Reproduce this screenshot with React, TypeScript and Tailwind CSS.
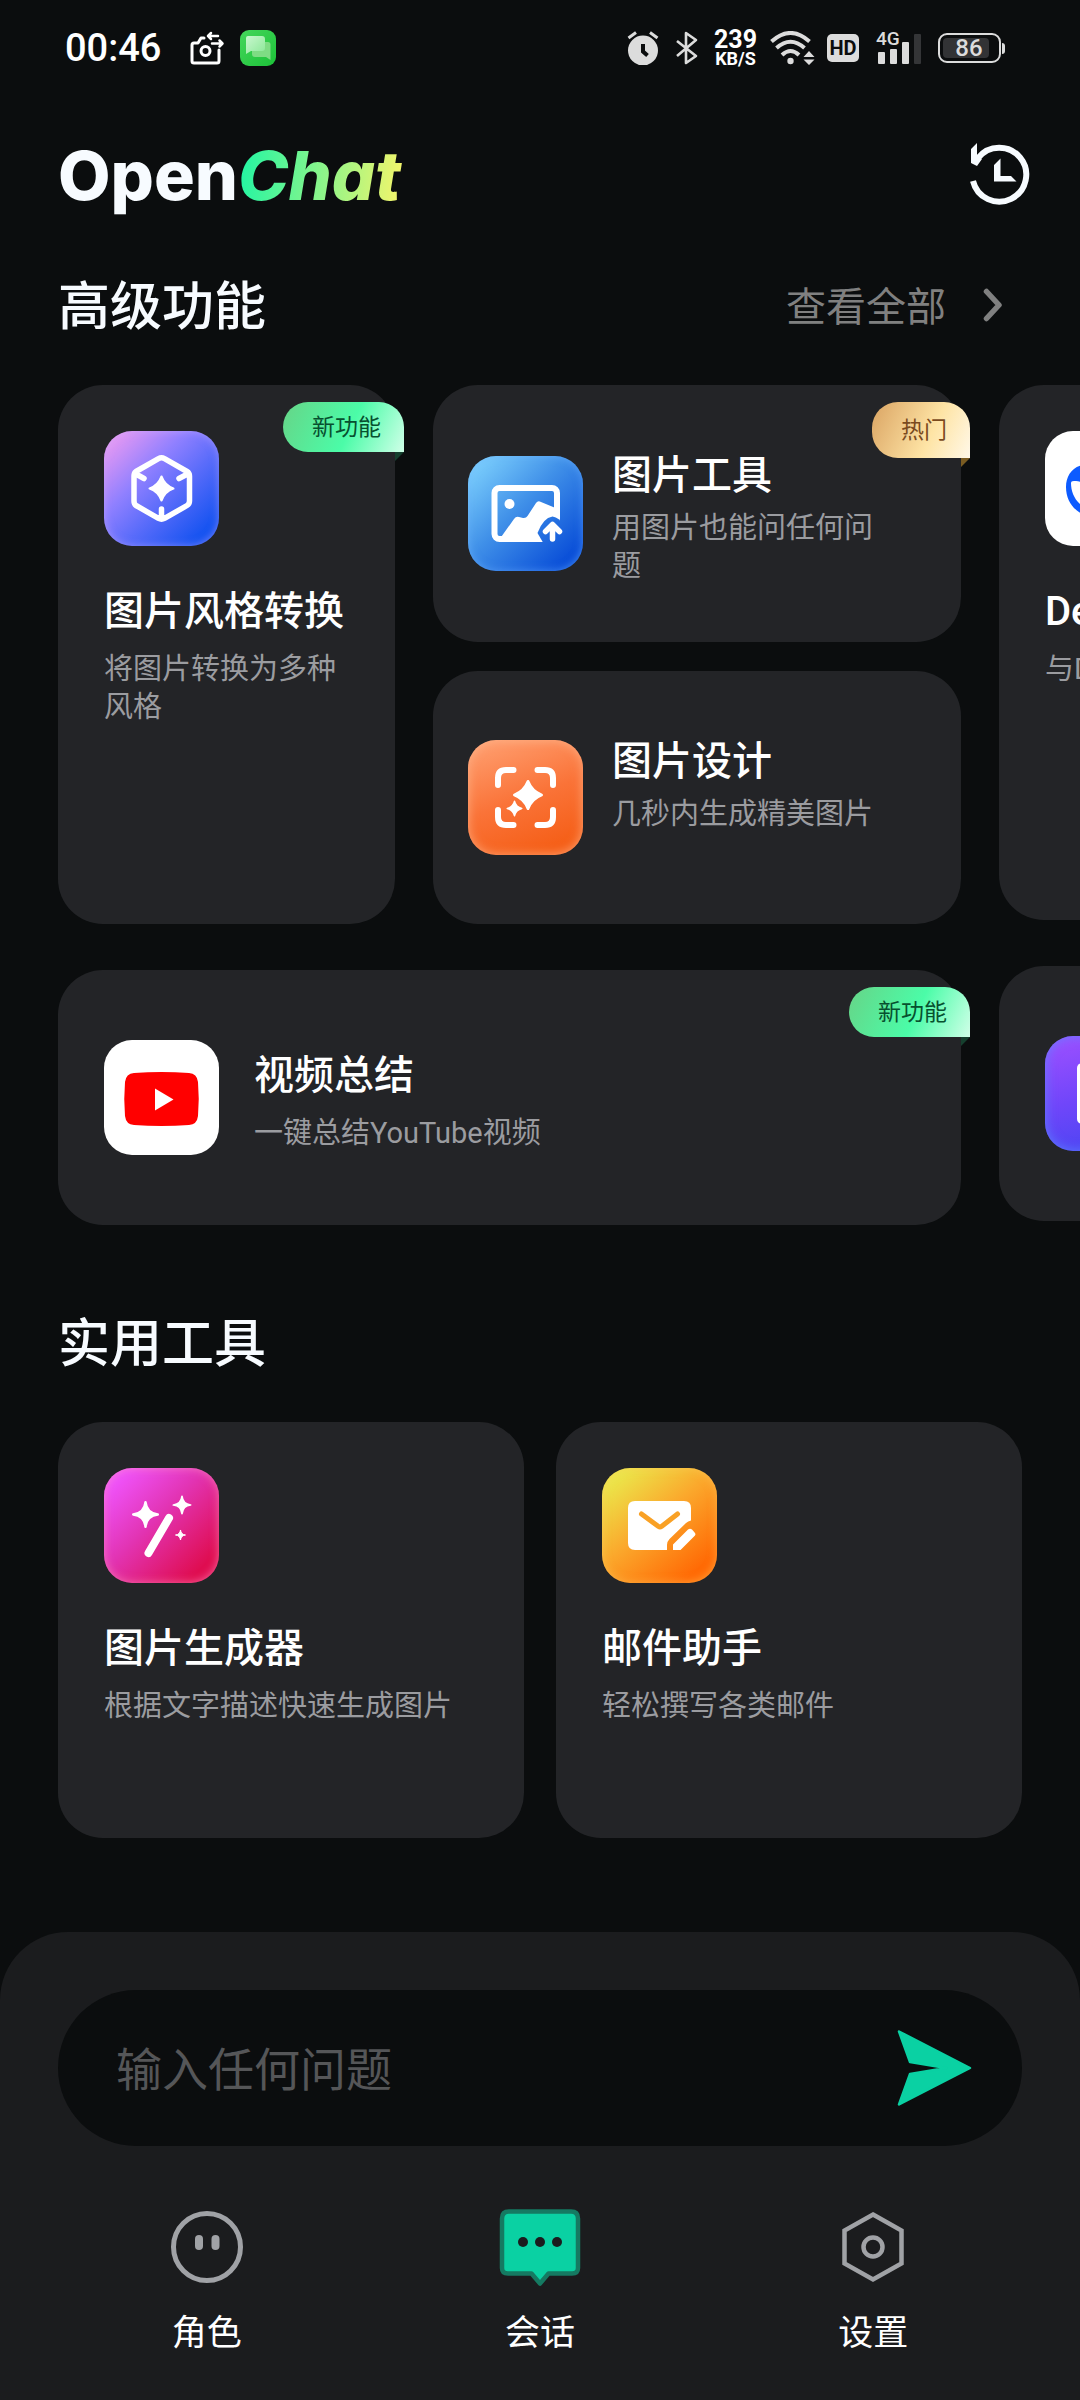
import type { ReactNode } from "react";

const FONT = "font-['Roboto','Noto_Sans_CJK_SC',sans-serif]";

function Star({ cx, cy, r, k = 0.28 }: { cx: number; cy: number; r: number; k?: number }) {
  const q = r * k * 0.6;
  const s = r * 0.09;
  return (
    <path
      fill="#fff"
      stroke="#fff"
      strokeWidth={s * 2}
      strokeLinejoin="round"
      d={`M${cx} ${cy - r + s}Q${cx + q} ${cy - q} ${cx + r - s} ${cy}Q${cx + q} ${cy + q} ${cx} ${cy + r - s}Q${cx - q} ${cy + q} ${cx - r + s} ${cy}Q${cx - q} ${cy - q} ${cx} ${cy - r + s}Z`}
    />
  );
}

function Tile({ className, children }: { className: string; children?: ReactNode }) {
  return (
    <span className={`block size-[115px] shrink-0 overflow-hidden rounded-[28px] ${className}`}>
      <svg viewBox="0 0 115 115" className="size-full" fill="none" aria-hidden="true">
        {children}
      </svg>
    </span>
  );
}

const StyleIcon = () => (
  <Tile className="bg-[linear-gradient(135deg,#fb9ff0_0%,#9080ff_36%,#5a6cfa_58%,#1553f0_88%)] shadow-[inset_0_0_9px_rgba(200,170,255,0.55)]">
    <path d="M54.500 27.600Q57.500 26 60.500 27.600L83 40.500Q85.500 42 85.500 45V70Q85.500 73 83 74.500L60.500 87.400Q57.500 89 54.500 87.400L32 74.500Q30 73 30 70V45Q30 42 32 40.500ZM31 42.500L40 47.500M84.500 42.500L75 47.500M57.500 87V78" stroke="#fff" strokeWidth="5.500" strokeLinecap="round" strokeLinejoin="round" />
    <Star cx={57.5} cy={57.5} r={13} k={0.4} />
  </Tile>
);

const PictureIcon = () => (
  <Tile className="bg-[linear-gradient(135deg,#82d6ff_2%,#3f8fe8_45%,#0a4fd8_88%)] shadow-[inset_0_0_9px_rgba(110,180,255,0.6)]">
    <mask id="upload-cut">
      <rect width="115" height="115" fill="#fff" />
      <path d="M69.500 77Q75 62 84.500 60.500Q94 62 99.500 77L96 90H77Z" fill="#000" />
    </mask>
    <g mask="url(#upload-cut)">
      <rect x="26.500" y="32" width="62.500" height="51" rx="5" stroke="#fff" strokeWidth="6" />
      <path d="M31 84L46 63Q48 60 51 61L55 62Q58 62.500 59.500 60L68 47Q70 44 73 46L90 53V84Z" fill="#fff" />
      <circle cx="41.500" cy="48" r="5" fill="#fff" />
    </g>
    <path d="M84.500 83V69M77.500 75.500L84.500 68.500L91.500 75.500" stroke="#fff" strokeWidth="5.500" strokeLinecap="round" strokeLinejoin="round" />
  </Tile>
);

const DesignIcon = () => (
  <Tile className="bg-[linear-gradient(160deg,#ff9f70_4%,#fa7338_50%,#f55f18_88%)] shadow-[inset_0_0_11px_rgba(255,185,145,0.75)]">
    <path d="M45.500 30H38Q30 30 30 38V45M69.500 30H77Q85 30 85 38V45M30 70V77Q30 85 38 85H45.500M85 70V77Q85 85 77 85H69.500" stroke="#fff" strokeWidth="6" strokeLinecap="round" />
    <Star cx={60} cy={55} r={15} k={0.42} />
    <Star cx={46.5} cy={68.5} r={8} k={0.3} />
  </Tile>
);

const VideoIcon = () => (
  <Tile className="bg-white">
    <path d="M30 33Q57.500 31 85 33Q93 33.500 94 42Q95.500 59 94 76Q93 84.500 85 85Q57.500 87 30 85Q22 84.500 21 76Q19.500 59 21 42Q22 33.500 30 33Z" fill="#f00" />
    <path d="M51 48.500L69.500 59.500L51 70.500Z" fill="#fff" />
  </Tile>
);

const WandIcon = () => (
  <Tile className="bg-[linear-gradient(135deg,#f055ff_8%,#e234b4_44%,#df0d50_86%)] shadow-[inset_0_0_10px_rgba(255,140,190,0.7)]">
    <Star cx={41.5} cy={46.5} r={13.5} k={0.15} />
    <Star cx={78} cy={37} r={9.5} k={0.15} />
    <Star cx={76.5} cy={67} r={5.5} k={0.15} />
    <path d="M65 50L44.500 85" stroke="#fff" strokeWidth="8" strokeLinecap="round" />
  </Tile>
);

const MailIcon = () => (
  <Tile className="bg-[linear-gradient(140deg,#eaea4c_8%,#fba82c_46%,#ff6a05_86%)] shadow-[inset_0_0_10px_rgba(255,200,90,0.6)]">
    <path d="M33 33H82Q89 33 89 40V52.500Q86 53 84 55L67.500 71Q65 73.500 65 77V82H33Q26 82 26 75V40Q26 33 33 33Z" fill="#fff" />
    <path d="M39.500 46L56.500 58.500Q58 59.500 59.500 58.500L75.500 46" stroke="#f9a125" strokeWidth="5" strokeLinecap="round" />
    <path d="M71 82V76.500L86 61.500Q88 60 90 61.500L93 65Q94 66 93 67.500L78.500 82Z" fill="#fff" />
  </Tile>
);

const WhaleIcon = () => (
  <Tile className="bg-white">
    <path d="M38 34C27 36 21 45 21 56C21 70 29 80 40 84C52 89 66 88 77 82C81 84 86 84 89 82L83 76C89 68 91 58 91 50C96 49 99 44 99 38C93 42 87 40 82 37C77 33 76 41 80 46C70 42 60 33 50 33C45 31 42 33 38 34ZM26 52C26 50 28 50 31 50C42 51 51 60 57 70C60 75 62 77 66 78C56 83 44 80 36 74C29 68 26 60 26 52Z" fill="#0d5bff" fillRule="evenodd" />
  </Tile>
);

const DocumentIcon = () => (
  <Tile className="bg-[linear-gradient(165deg,#9c50ff_4%,#7046fa_50%,#4945f2_92%)] shadow-[inset_0_0_12px_rgba(95,130,255,0.9)]">
    <rect x="32" y="27" width="52" height="61" rx="5" fill="#fff" />
  </Tile>
);

function Badge({ kind }: { kind: "new" | "hot" }) {
  const hot = kind === "hot";
  return (
    <span className="absolute top-[17px] -right-[9px] flex flex-col items-end">
      <span
        className={`flex items-center rounded-[26px] rounded-br-none pr-[23px] pl-[29px] text-[23px] leading-[48px] whitespace-nowrap ${
          hot
            ? "bg-[linear-gradient(115deg,#dda968_5%,#fee4a5_60%,#fff8e8_100%)] pt-[5px] pb-[3px] text-[#7a4a1e]"
            : "bg-[linear-gradient(115deg,#64d88a_5%,#4bfca8_55%,#d0ffe8_100%)] pt-[2px] text-[#07502f]"
        }`}
      >
        {hot ? "热门" : "新功能"}
      </span>
      <span className={`size-[9px] [clip-path:polygon(0_0,100%_0,0_100%)] ${hot ? "bg-[#7a5c22]" : "bg-[#15402e]"}`} />
    </span>
  );
}

const CARD = "relative rounded-[45px] bg-[#232427] text-left";

function Texts({ title, desc, tight }: { title: string; desc: string; tight?: boolean }) {
  return (
    <span className={`flex flex-col ${tight ? "gap-[9px]" : "gap-[14px]"}`}>
      <span className="text-[40px] leading-[48px] font-medium text-white">{title}</span>
      <span className="text-[29px] leading-[38px] text-[#9b9ca0]">{desc}</span>
    </span>
  );
}

function TallCard({ icon, title, desc, badge, className = "" }: { icon: ReactNode; title: string; desc: string; badge?: "new" | "hot"; className?: string }) {
  return (
    <button type="button" className={`${CARD} flex flex-col items-start gap-[42px] px-[46px] pt-[46px] pb-[40px] ${className}`}>
      {icon}
      <Texts title={title} desc={desc} />
      {badge && <Badge kind={badge} />}
    </button>
  );
}

function RowCard({ icon, title, desc, badge, className = "" }: { icon: ReactNode; title: string; desc: string; badge?: "new" | "hot"; className?: string }) {
  return (
    <button type="button" className={`${CARD} flex items-center gap-[29px] pr-[70px] pl-[35px] ${className}`}>
      {icon}
      <span className="self-start pt-[67px]">
        <Texts title={title} desc={desc} tight />
      </span>
      {badge && <Badge kind={badge} />}
    </button>
  );
}

function StatusBar() {
  return (
    <div className="flex h-[96px] items-center justify-between pr-[75px] pl-[65px] text-[#dcdcdc]">
      <div className="flex items-center">
        <time className="text-[38px] leading-[40px] font-medium text-white">00:46</time>
        <svg viewBox="0 0 36 36" className="ml-[28px] size-[36px]" fill="none" stroke="#fff" strokeWidth="3" strokeLinecap="round" strokeLinejoin="round" aria-hidden="true">
          <path d="M15 8H12L9 13H5Q3 13 3 15V31Q3 33 5 33H28Q30 33 30 31V20" />
          <circle cx="16.500" cy="21" r="4.500" />
          <path d="M29 6H19M22 3L19 6L22 9" strokeWidth="2.500" />
          <path d="M23 13.500H33M30.500 10.500L33.500 13.500L30.500 16.500" strokeWidth="2.500" />
        </svg>
        <svg viewBox="0 0 36 36" className="ml-[15px] size-[36px]" aria-hidden="true">
          <defs>
            <linearGradient id="sms" x1="0" y1="0" x2="1" y2="1">
              <stop offset="0" stopColor="#45d65c" />
              <stop offset="1" stopColor="#1cc238" />
            </linearGradient>
            <linearGradient id="bubble" x1="0" y1="0" x2="1" y2="1">
              <stop offset="0" stopColor="#c9f7cf" />
              <stop offset="1" stopColor="#8be897" />
            </linearGradient>
          </defs>
          <rect width="36" height="36" rx="9" fill="url(#sms)" />
          <path d="M15 12H28Q30.500 12 30.500 14.500V30L26 27H15Q12 27 12 24V15Q12 12 15 12Z" fill="#7fdc84" />
          <path d="M8 6H22Q25 6 25 9V18Q25 21 22 21H11L6 24V8Q6 6 8 6Z" fill="url(#bubble)" />
        </svg>
      </div>
      <div className="flex items-center">
        <svg viewBox="0 0 32 34" className="h-[34px] w-[32px]" aria-hidden="true">
          <circle cx="16" cy="19.500" r="15" fill="currentColor" />
          <path d="M1.500 7L9 1.500M30.500 7L23 1.500" stroke="currentColor" strokeWidth="3" />
          <path d="M16 13V20.500L20.500 24.500" stroke="#0b0d0e" strokeWidth="4" fill="none" />
        </svg>
        <svg viewBox="0 0 22 34" className="ml-[17px] h-[34px] w-[22px]" fill="none" stroke="currentColor" strokeWidth="2.600" strokeLinejoin="round" aria-hidden="true">
          <path d="M1 10L20 25L10 32V2L20 9L1 25" />
        </svg>
        <div className="ml-[16px] flex flex-col items-center font-bold text-white">
          <span className="text-[25px] leading-[21px]">239</span>
          <span className="text-[18px] leading-[18px]">KB/S</span>
        </div>
        <svg viewBox="0 0 45 34" className="ml-[13px] h-[34px] w-[45px]" fill="none" stroke="currentColor" aria-hidden="true">
          <path d="M1.500 10.500Q20.500 -6.500 39.500 10.500M6.500 17Q20.500 4.500 34.500 17M12 24Q20.500 16 29 24" strokeWidth="4" />
          <circle cx="20.500" cy="30" r="3.200" fill="currentColor" stroke="none" />
          <path d="M33.500 26L39 20L44.500 26ZM33.500 28.500L39 34L44.500 28.500Z" fill="currentColor" stroke="none" />
        </svg>
        <span className="ml-[12px] flex h-[28px] w-[32px] items-center justify-center rounded-[5px] bg-[#dcdcdc] text-[20px] leading-[28px] font-bold text-[#0b0d0e]">HD</span>
        <div className="relative ml-[17px] h-[34px] w-[46px]">
          <svg viewBox="0 0 46 34" className="size-full" fill="currentColor" aria-hidden="true">
            <rect x="2" y="21" width="7" height="12" rx="1" />
            <rect x="14" y="18" width="7" height="15" rx="1" />
            <rect x="26" y="11" width="7" height="22" rx="1" />
            <rect x="38" y="3" width="7" height="30" rx="1" fill="#343537" />
          </svg>
          <span className="absolute top-0 left-0 text-[19px] leading-[16px] font-medium">4G</span>
        </div>
        <div className="ml-[16px] flex items-center gap-px">
          <span className="flex h-[30px] w-[63px] rounded-[9px] border-2 border-[#dcdcdc] p-[3px]">
            <span className="flex w-[46px] items-center justify-center rounded-[4px] bg-[#323335] pl-[6px] text-[24px] leading-[20px] font-medium">86</span>
          </span>
          <span className="h-[11px] w-[3px] rounded-r bg-[#dcdcdc]" />
        </div>
      </div>
    </div>
  );
}

function NavItem({ label, icon, active }: { label: string; icon: ReactNode; active?: boolean }) {
  return (
    <a href="#" aria-current={active ? "page" : undefined} className="flex flex-col items-center gap-[22px]">
      {icon}
      <span className="text-[35px] leading-[44px] text-white">{label}</span>
    </a>
  );
}

export default function App() {
  return (
    <div className={`flex min-h-screen flex-col overflow-x-hidden bg-[#0b0d0e] ${FONT}`} lang="zh-CN">
      <StatusBar />

      <header className="flex items-center justify-between pt-[37px] pr-[50px] pl-[58px]">
        <h1 className="font-['Inter',sans-serif] text-[68px] leading-[84px] font-extrabold text-[#f7fbff]">
          Open
          <span className="bg-[linear-gradient(95deg,#1df5a4_0%,#8df58a_50%,#f7f56a_96%)] bg-clip-text pr-2 text-transparent italic">Chat</span>
        </h1>
        <button type="button" aria-label="历史记录">
          <svg viewBox="0 0 60 64" className="h-[64px] w-[60px]" aria-hidden="true">
            <path d="M3 38A27 27 0 1 0 8 15" fill="none" stroke="#f7fbff" strokeWidth="6" />
            <path d="M1 6L7 0V13L12 16L7 23L1 20Z" fill="#f7fbff" />
            <path d="M24 22L30.500 15.500V33H41L46.500 38.500H24Z" fill="#f7fbff" />
          </svg>
        </button>
      </header>

      <main className="flex-1 pb-[60px]">
        <section aria-labelledby="advanced">
          <div className="flex items-center justify-between pt-[53px] pr-[77px] pl-[58px]">
            <h2 id="advanced" className="text-[52px] leading-[76px] font-medium text-[#f7fbff]">高级功能</h2>
            <a href="#" className="flex items-center gap-[37px] text-[40px] leading-[60px] text-[#808080]">
              查看全部
              <svg viewBox="0 0 20 40" className="h-[40px] w-[20px]" fill="none" stroke="currentColor" strokeWidth="5.500" strokeLinecap="round" strokeLinejoin="round" aria-hidden="true">
                <path d="M3.500 3.500L16 17L3.500 30.500" />
              </svg>
            </a>
          </div>

          <div className="mt-[39px] flex items-start gap-[38px] overflow-x-auto pl-[58px] [scrollbar-width:none]">
            <div className="grid w-[calc(100%-119px)] shrink-0 grid-cols-[337fr_528fr] gap-x-[38px] gap-y-[46px]">
              <TallCard icon={<StyleIcon />} title="图片风格转换" desc="将图片转换为多种风格" badge="new" />
              <div className="flex flex-col gap-[29px]">
                <RowCard className="min-h-[257px]" icon={<PictureIcon />} title="图片工具" desc="用图片也能问任何问题" badge="hot" />
                <RowCard className="min-h-[253px]" icon={<DesignIcon />} title="图片设计" desc="几秒内生成精美图片" />
              </div>
              <button type="button" className={`${CARD} col-span-2 flex min-h-[255px] items-center gap-[35px] px-[46px]`}>
                <VideoIcon />
                <span className="pt-2">
                  <Texts title="视频总结" desc="一键总结YouTube视频" />
                </span>
                <Badge kind="new" />
              </button>
            </div>
            <div className="flex w-[337px] shrink-0 flex-col gap-[46px]">
              <TallCard className="min-h-[535px]" icon={<WhaleIcon />} title="DeepSeek" desc="与DeepSeek对话" />
              <button type="button" aria-label="文档" className={`${CARD} flex min-h-[255px] items-center px-[46px]`}>
                <DocumentIcon />
              </button>
            </div>
          </div>
        </section>

        <section aria-labelledby="tools" className="px-[58px] pt-[82px]">
          <h2 id="tools" className="text-[52px] leading-[76px] font-medium text-[#f7fbff]">实用工具</h2>
          <div className="mt-[39px] grid grid-cols-2 gap-[32px]">
            <TallCard className="min-h-[416px]" icon={<WandIcon />} title="图片生成器" desc="根据文字描述快速生成图片" />
            <TallCard className="min-h-[416px]" icon={<MailIcon />} title="邮件助手" desc="轻松撰写各类邮件" />
          </div>
        </section>
      </main>

      <footer className="rounded-t-[68px] bg-[#1b1c1e] pt-[58px] pb-[44px]">
        <form className="mx-[58px] flex h-[156px] items-center rounded-full bg-[#0b0d0e] pr-[50px] pl-[58px]" onSubmit={(e) => e.preventDefault()}>
          <input
            type="text"
            aria-label="输入任何问题"
            placeholder="输入任何问题"
            className="h-[80px] min-w-0 flex-1 bg-transparent pt-[4px] text-[46px] text-white outline-none placeholder:text-[#555658] placeholder:opacity-100"
          />
          <button type="submit" aria-label="发送">
            <svg viewBox="0 0 75 78" className="h-[78px] w-[75px]" aria-hidden="true">
              <path d="M2 2.500L73 39L2 75.500L13 45L49 39L13 33Z" fill="#0ad1a3" stroke="#0ad1a3" strokeWidth="2.500" strokeLinejoin="round" />
            </svg>
          </button>
        </form>
        <nav className="mx-[40px] mt-[62px] grid grid-cols-3">
          <NavItem
            label="角色"
            icon={
              <svg viewBox="0 0 82 82" className="size-[82px]" aria-hidden="true">
                <circle cx="41" cy="39" r="33.500" fill="none" stroke="#a0a2a6" strokeWidth="5" />
                <rect x="29" y="27" width="8" height="15" rx="4" fill="#a0a2a6" />
                <rect x="45.500" y="27" width="8" height="15" rx="4" fill="#a0a2a6" />
              </svg>
            }
          />
          <NavItem
            label="会话"
            active
            icon={
              <svg viewBox="0 0 82 82" className="size-[82px]" aria-hidden="true">
                <path d="M10 3.500H72Q79 3.500 79 10.500V60Q79 65.500 73 65.500H49.500L41 75.500L32.500 65.500H9Q3 65.500 3 60V10.500Q3 3.500 10 3.500Z" fill="#0ad1a3" stroke="#157a62" strokeWidth="4.500" strokeLinejoin="round" />
                <circle cx="24" cy="34" r="5" fill="#1b1c1e" />
                <circle cx="41" cy="34" r="5" fill="#1b1c1e" />
                <circle cx="58" cy="34" r="5" fill="#1b1c1e" />
              </svg>
            }
          />
          <NavItem
            label="设置"
            icon={
              <svg viewBox="0 0 82 82" className="size-[82px]" fill="none" stroke="#a0a2a6" strokeWidth="4.500" aria-hidden="true">
                <path d="M41 6.500L69.500 22.500V55.500L41 71.500L12.500 55.500V22.500Z" />
                <circle cx="41" cy="39" r="9.500" />
              </svg>
            }
          />
        </nav>
      </footer>
    </div>
  );
}
